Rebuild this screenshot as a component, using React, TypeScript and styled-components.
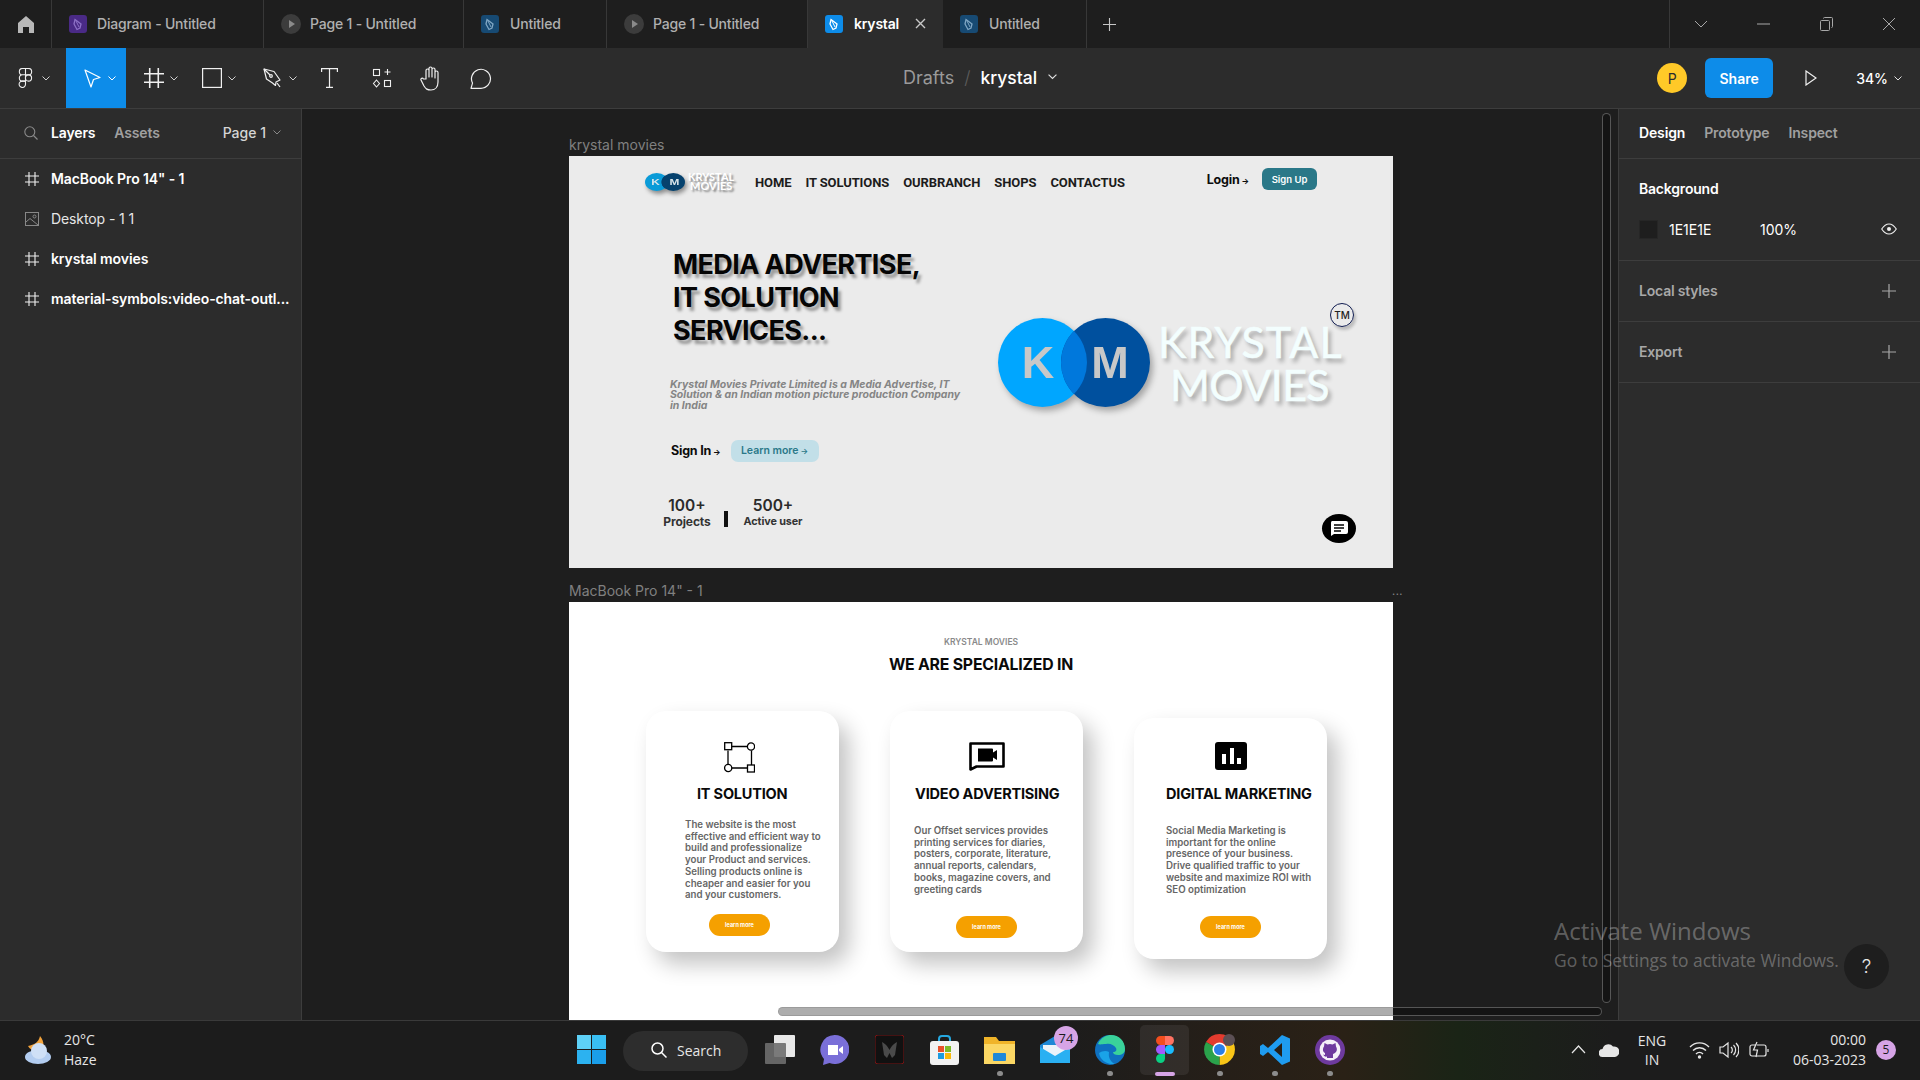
import { styled, createGlobalStyle } from 'styled-components';

const GlobalStyle = createGlobalStyle`
  html, body {
    margin: 0;
    padding: 0;
    background: #1e1e1e;
    overflow: hidden;
  }
`;

const Screen = styled.div`
  position: relative;
  width: 1920px;
  height: 1080px;
  display: flex;
  flex-direction: column;
  overflow: hidden;
  font-family: 'Inter', sans-serif;
  color: #fff;
`;

/* ---------- tab bar ---------- */

const TabBar = styled.div`
  display: flex;
  height: 48px;
  flex: 0 0 48px;
  background: #1e1e1e;
`;

const HomeTab = styled.div`
  width: 52px;
  display: flex;
  align-items: center;
  justify-content: center;
  border-right: 1px solid #383838;
  box-sizing: border-box;
`;

const Tab = styled.div<{ $w: number; $active?: boolean; $gap?: number }>`
  width: ${(p) => p.$w}px;
  box-sizing: border-box;
  display: flex;
  align-items: center;
  gap: ${(p) => p.$gap ?? 11}px;
  padding: 0 0 1px 17px;
  font-size: 14px;
  font-weight: ${(p) => (p.$active ? 600 : 500)};
  letter-spacing: -0.2px;
  white-space: nowrap;
  color: ${(p) => (p.$active ? '#fff' : '#b0b0b0')};
  background: ${(p) => (p.$active ? '#2c2c2c' : 'transparent')};
  border-right: ${(p) => (p.$active ? 'none' : '1px solid #383838')};
`;

const TabClose = styled.span`
  margin-left: 5px;
  display: flex;
`;

const NewTab = styled.div`
  width: 44px;
  display: flex;
  align-items: center;
  justify-content: center;
`;

const WindowControls = styled.div`
  margin-left: auto;
  width: 251px;
  box-sizing: border-box;
  display: flex;
  border-left: 1px solid #383838;
`;

const WindowButton = styled.div`
  flex: 1;
  display: flex;
  align-items: center;
  justify-content: center;
`;

/* ---------- toolbar ---------- */

const Toolbar = styled.div`
  display: flex;
  align-items: center;
  height: 61px;
  flex: 0 0 61px;
  box-sizing: border-box;
  background: #2c2c2c;
  border-bottom: 1px solid #3d3d3d;
`;

const ToolGroup = styled.div`
  width: 903px;
  height: 60px;
  display: flex;
`;

const ToolButton = styled.div<{ $w: number; $pad: number; $active?: boolean; $gap?: number }>`
  width: ${(p) => p.$w}px;
  height: 60px;
  box-sizing: border-box;
  padding-left: ${(p) => p.$pad}px;
  display: flex;
  align-items: center;
  gap: ${(p) => p.$gap ?? 6}px;
  background: ${(p) => (p.$active ? '#0d8ce9' : 'transparent')};
`;

const Breadcrumb = styled.div`
  display: flex;
  align-items: center;
  padding-bottom: 2px;
  font-size: 18px;
  font-weight: 400;
  color: #9a9a9a;
`;

const Slash = styled.span`
  margin: 0 10px 0 10px;
  color: #5c5c5c;
  font-weight: 300;
`;

const FileName = styled.span`
  color: #fff;
  font-size: 17.5px;
  font-weight: 500;
  margin-right: 11px;
`;

const ToolbarRight = styled.div`
  margin-left: auto;
  display: flex;
  align-items: center;
  padding-right: 18px;
`;

const Avatar = styled.div`
  width: 30px;
  height: 30px;
  border-radius: 50%;
  background: #ffc928;
  color: #2c2c2c;
  font-size: 14px;
  display: flex;
  align-items: center;
  justify-content: center;
`;

const ShareButton = styled.div`
  width: 68px;
  height: 40px;
  margin-left: 18px;
  border-radius: 6px;
  background: #0d8ce9;
  font-size: 14px;
  font-weight: 600;
  display: flex;
  align-items: center;
  justify-content: center;
`;

const PlayButton = styled.div`
  margin: 0 39px 0 32px;
  display: flex;
`;

const Zoom = styled.div`
  display: flex;
  align-items: center;
  gap: 6px;
  font-size: 14px;
  font-weight: 500;
`;

/* ---------- side panels ---------- */

const Main = styled.div`
  flex: 1;
  display: flex;
  min-height: 0;
`;

const Panel = styled.div`
  width: 302px;
  flex: 0 0 302px;
  box-sizing: border-box;
  background: #2c2c2c;
  font-size: 14px;
`;

const LeftPanel = styled(Panel)`
  border-right: 1px solid #3d3d3d;
`;

const RightPanel = styled(Panel)`
  border-left: 1px solid #3d3d3d;
`;

const PanelTabs = styled.div`
  height: 50px;
  box-sizing: border-box;
  display: flex;
  align-items: center;
  padding-bottom: 2px;
  border-bottom: 1px solid #3d3d3d;
`;

const LeftTabs = styled(PanelTabs)`
  padding-left: 24px;
`;

const RightTabs = styled(PanelTabs)`
  padding-left: 20px;
  gap: 19px;
`;

const PanelTab = styled.span<{ $active?: boolean }>`
  font-weight: 600;
  letter-spacing: -0.15px;
  color: ${(p) => (p.$active ? '#fff' : '#a0a0a0')};
`;

const LayersTab = styled(PanelTab)`
  margin-left: 13px;
  margin-right: 19px;
`;

const PagePicker = styled.div`
  margin-left: auto;
  padding-right: 20px;
  display: flex;
  align-items: center;
  gap: 7px;
  font-weight: 500;
  color: #d5d5d5;
`;

const LayerRow = styled.div<{ $plain?: boolean }>`
  height: 40px;
  box-sizing: border-box;
  padding: 0 0 1px 25px;
  display: flex;
  align-items: center;
  gap: 12px;
  font-weight: ${(p) => (p.$plain ? 400 : 600)};
  letter-spacing: -0.1px;
  white-space: nowrap;
  color: ${(p) => (p.$plain ? '#e6e6e6' : '#fff')};
`;

const Section = styled.div<{ $h: number }>`
  height: ${(p) => p.$h}px;
  box-sizing: border-box;
  padding: 0 20px;
  border-bottom: 1px solid #3d3d3d;
`;

const SectionHead = styled.div<{ $muted?: boolean }>`
  height: 60px;
  box-sizing: border-box;
  padding-bottom: 1px;
  display: flex;
  align-items: center;
  justify-content: space-between;
  font-weight: 600;
  letter-spacing: -0.2px;
  color: ${(p) => (p.$muted ? '#a8a8a8' : '#fff')};

  svg {
    margin-right: 4px;
  }
`;

const FillRow = styled.div`
  display: flex;
  align-items: center;
  height: 20px;
  font-weight: 400;
`;

const Swatch = styled.div`
  width: 19px;
  height: 19px;
  background: #1e1e1e;
  margin-right: 11px;
  border: 1px solid #262626;
  box-sizing: border-box;
`;

const FillHex = styled.span`
  width: 91px;
`;

const EyeSlot = styled.span`
  margin-left: auto;
  display: flex;
  margin-right: 3px;
`;

/* ---------- canvas ---------- */

const Canvas = styled.div`
  position: relative;
  flex: 1;
  min-width: 0;
  box-sizing: border-box;
  padding: 27px 0 0 267px;
  background: #1e1e1e;
  overflow: hidden;
`;

const FrameLabel = styled.div`
  width: 834px;
  height: 20px;
  box-sizing: border-box;
  padding-bottom: 3px;
  display: flex;
  justify-content: space-between;
  align-items: center;
  font-size: 14px;
  color: #808080;
`;

const FrameDots = styled.span`
  font-size: 11px;
  color: #888;
  letter-spacing: 0.5px;
`;

const HeroFrame = styled.div`
  position: relative;
  width: 824px;
  height: 412px;
  margin-bottom: 14px;
  background: #ebebeb;
  color: #000;
  display: flex;
  flex-direction: column;
`;

const NavRow = styled.div`
  display: flex;
  align-items: flex-start;
  padding: 12px 76px 0 76px;
  height: 34px;
  box-sizing: border-box;
`;

const SmallBrand = styled.div`
  width: 110px;
  height: 22px;
  display: flex;
  align-items: center;
  position: relative;
  top: 3px;
`;

const SmallBrandText = styled.div`
  margin: -3px 0 0 3px;
  font-family: 'Lato', sans-serif;
  font-size: 11px;
  line-height: 9px;
  font-weight: 700;
  text-align: center;
  color: #fff;
  white-space: nowrap;
  text-shadow: 2px 2px 2px rgba(0, 0, 0, 0.45);
`;

const NavLinks = styled.div`
  display: flex;
  gap: 14px;
  margin-top: 7px;
  font-family: 'Roboto', sans-serif;
  font-size: 13px;
  line-height: 16px;
  font-weight: 700;
  letter-spacing: -0.1px;
  color: #1c1c1c;
  white-space: nowrap;
`;

const AuthGroup = styled.div`
  margin-left: auto;
  display: flex;
  align-items: center;
  gap: 13px;
  height: 22px;
`;

const TextLink = styled.span`
  font-size: 12.5px;
  font-weight: 700;
  letter-spacing: -0.2px;
  white-space: nowrap;
  color: #0c0c0c;
`;

const TinyArrow = styled.span`
  font-size: 8px;
  margin-left: 2px;
`;

const SignUp = styled.div`
  width: 55px;
  height: 22px;
  border-radius: 6px;
  background: #2a7888;
  color: #fff;
  font-size: 9.5px;
  font-weight: 600;
  display: flex;
  align-items: center;
  justify-content: center;
`;

const HeroBody = styled.div`
  display: flex;
`;

const HeroCopy = styled.div`
  width: 429px;
  box-sizing: border-box;
  padding: 58px 0 0 101px;
`;

const Headline = styled.h1`
  margin: 0 0 33px 3px;
  font-size: 27px;
  line-height: 33px;
  font-weight: 700;
  letter-spacing: -0.6px;
  color: #050505;
  white-space: nowrap;
  text-shadow: 3px 4px 3px rgba(0, 0, 0, 0.35);
`;

const Lead = styled.p`
  margin: 0 0 29px;
  font-family: 'Inter', sans-serif;
  font-size: 10.5px;
  line-height: 10.3px;
  font-weight: 700;
  font-style: italic;
  color: #858585;
  white-space: nowrap;
`;

const ActionRow = styled.div`
  display: flex;
  align-items: center;
  gap: 10px;
  padding-left: 1px;
`;

const LearnMore = styled.div`
  width: 88px;
  height: 22px;
  border-radius: 7px;
  background: #c2dfe8;
  color: #2a7888;
  font-size: 10.5px;
  font-weight: 600;
  display: flex;
  align-items: center;
  justify-content: center;
  white-space: nowrap;
`;

const StatsRow = styled.div`
  display: flex;
  align-items: flex-end;
  margin: 36px 0 0 -13px;
`;

const Stat = styled.div`
  width: 60px;
  text-align: center;
`;

const StatValue = styled.div`
  font-size: 15.5px;
  line-height: 16px;
  font-weight: 600;
  color: #2a2a2a;
`;

const StatLabel = styled.div<{ $size: number }>`
  font-size: ${(p) => p.$size}px;
  line-height: 16px;
  font-weight: 700;
  letter-spacing: -0.1px;
  color: #333;
  white-space: nowrap;
`;

const StatDivider = styled.div`
  width: 4px;
  height: 16px;
  margin: 0 15px 3px 7px;
  background: #111;
`;

const BigBrand = styled.div`
  position: relative;
  display: flex;
  margin-top: 128px;
  height: 89px;
`;

const BigBrandText = styled.div`
  margin: 2px 0 0 8px;
  width: 183px;
  font-family: 'Lato', sans-serif;
  font-size: 43px;
  line-height: 43px;
  font-weight: 400;
  text-align: center;
  color: #f3fefe;
  white-space: nowrap;
  -webkit-text-stroke: 0.5px #f3fefe;
  text-shadow: 3px 4px 4px rgba(0, 0, 0, 0.3);
`;

const BrandLine = styled.div<{ $spacing: number }>`
  letter-spacing: ${(p) => p.$spacing}px;
`;

const TmBadge = styled.div`
  position: absolute;
  left: 332px;
  top: -15px;
  width: 24px;
  height: 24px;
  box-sizing: border-box;
  border: 1px solid #101c50;
  border-radius: 50%;
  font-size: 10px;
  font-weight: 500;
  color: #222;
  display: flex;
  align-items: center;
  justify-content: center;
  box-shadow: 2px 3px 3px rgba(0, 0, 0, 0.2);
`;

const ChatBubble = styled.div`
  position: absolute;
  left: 753px;
  top: 358px;
  width: 34px;
  height: 29px;
  border-radius: 50%;
  background: #000;
  display: flex;
  align-items: center;
  justify-content: center;
`;

const ServicesFrame = styled.div`
  width: 824px;
  height: 560px;
  background: #fff;
  color: #000;
  box-sizing: border-box;
  padding-top: 34px;
`;

const Eyebrow = styled.div`
  text-align: center;
  font-size: 8.5px;
  line-height: 12px;
  font-weight: 600;
  color: #8a8a8a;
`;

const SectionTitle = styled.h2`
  margin: 5px 0 34px;
  text-align: center;
  font-size: 15.8px;
  line-height: 24px;
  font-weight: 700;
  letter-spacing: -0.2px;
  color: #0a0a0a;
`;

const CardRow = styled.div`
  display: flex;
  align-items: flex-start;
  gap: 51px;
  padding-left: 77px;
`;

const Card = styled.div<{ $offset: number; $indent: number }>`
  width: 193px;
  height: 241px;
  box-sizing: border-box;
  margin-top: ${(p) => p.$offset}px;
  padding: ${(p) => 31 - p.$offset}px 0 0 ${(p) => p.$indent}px;
  border-radius: 20px;
  background: #fff;
  box-shadow: 10px 12px 22px rgba(0, 0, 0, 0.24);
  display: flex;
  flex-direction: column;
`;

const CardIcon = styled.div<{ $x: number }>`
  height: 31px;
  margin-left: ${(p) => p.$x}px;
  display: flex;
`;

const CardTitle = styled.h3<{ $x: number }>`
  margin: 12px 0 0 ${(p) => p.$x}px;
  font-size: 14.5px;
  line-height: 18px;
  font-weight: 700;
  letter-spacing: -0.2px;
  white-space: nowrap;
  color: #0a0a0a;
`;

const CardText = styled.p<{ $gap: number }>`
  margin: ${(p) => p.$gap}px 0 0;
  font-size: 9.7px;
  line-height: 11.7px;
  font-weight: 600;
  color: #666;
  white-space: nowrap;
`;

const CardButton = styled.div<{ $x: number; $gap: number }>`
  width: 61px;
  height: 22px;
  margin: ${(p) => p.$gap}px 0 0 ${(p) => p.$x}px;
  border-radius: 11px;
  background: #f5a000;
  color: #fff;
  font-size: 5.5px;
  font-weight: 700;
  display: flex;
  align-items: center;
  justify-content: center;
`;

const HScroll = styled.div`
  position: absolute;
  left: 476px;
  top: 898px;
  width: 824px;
  height: 9px;
  box-sizing: border-box;
  border-radius: 5px;
  background: rgba(0, 0, 0, 0.32);
  border: 1px solid rgba(140, 140, 140, 0.55);
`;

const VScroll = styled.div`
  position: absolute;
  left: 1300px;
  top: 4px;
  width: 9px;
  height: 890px;
  box-sizing: border-box;
  border-radius: 5px;
  background: rgba(0, 0, 0, 0.32);
  border: 1px solid rgba(140, 140, 140, 0.55);
`;

/* ---------- overlays ---------- */

const Watermark = styled.div`
  position: absolute;
  left: 1554px;
  top: 914px;
  font-family: 'Open Sans', sans-serif;
  color: rgba(255, 255, 255, 0.3);
  white-space: nowrap;
`;

const WatermarkTitle = styled.div`
  font-size: 24px;
  line-height: 34px;
`;

const WatermarkText = styled.div`
  font-size: 17.4px;
  line-height: 25px;
`;

const HelpButton = styled.div`
  position: absolute;
  left: 1844px;
  top: 944px;
  width: 45px;
  height: 45px;
  border-radius: 50%;
  background: #1e1e1e;
  font-size: 19px;
  font-weight: 300;
  display: flex;
  align-items: center;
  justify-content: center;
  color: #e8e8e8;
`;

/* ---------- taskbar ---------- */

const Taskbar = styled.div`
  height: 60px;
  flex: 0 0 60px;
  box-sizing: border-box;
  display: flex;
  align-items: center;
  border-top: 1px solid #3a3a3a;
  background: linear-gradient(90deg, #1c1c1c 0%, #1c1c1c 55%, #261f18 64%, #2a2116 70%, #1a2416 76%, #1c1c1c 84%);
  font-family: 'Open Sans', sans-serif;
  font-size: 14px;
  color: #e6e6e6;
`;

const Weather = styled.div`
  width: 577px;
  box-sizing: border-box;
  padding: 0 0 2px 24px;
  display: flex;
  align-items: center;
  gap: 8px;
  line-height: 20px;
`;

const WinSlot = styled.div`
  width: 46px;
  display: flex;
  padding-bottom: 2px;
`;

const SearchPill = styled.div`
  width: 125px;
  height: 40px;
  margin-right: 4px;
  border-radius: 20px;
  background: #2d2d2d;
  display: flex;
  align-items: center;
  gap: 10px;
  padding: 0 0 1px 28px;
  box-sizing: border-box;
`;

const TaskSlot = styled.div`
  position: relative;
  width: 55px;
  height: 59px;
  box-sizing: border-box;
  padding-bottom: 2px;
  display: flex;
  align-items: center;
  justify-content: center;
`;

const ActiveBack = styled.div`
  position: absolute;
  left: 3px;
  top: 4px;
  width: 49px;
  height: 50px;
  border-radius: 5px;
  background: rgba(255, 255, 255, 0.07);
`;

const RunDot = styled.span<{ $active?: boolean }>`
  position: absolute;
  left: 50%;
  bottom: 4px;
  transform: translateX(-50%);
  width: ${(p) => (p.$active ? 20 : 6)}px;
  height: ${(p) => (p.$active ? 4 : 5)}px;
  border-radius: 3px;
  background: ${(p) => (p.$active ? '#d6a4e6' : '#8c8c8c')};
`;

const CountBadge = styled.span`
  position: absolute;
  left: 27px;
  top: 5px;
  width: 24px;
  height: 24px;
  border-radius: 50%;
  background: #d6a4e6;
  color: #1a1a1a;
  font-size: 13px;
  display: flex;
  align-items: center;
  justify-content: center;
`;

const Tray = styled.div`
  margin-left: auto;
  display: flex;
  align-items: center;
  padding: 0 24px 2px 0;
`;

const TraySlot = styled.div<{ $w: number }>`
  width: ${(p) => p.$w}px;
  display: flex;
  justify-content: center;
`;

const TrayText = styled.div`
  width: 50px;
  margin-right: 4px;
  text-align: center;
  line-height: 19px;
`;

const Clock = styled.div`
  width: 89px;
  text-align: right;
  line-height: 20px;
  white-space: nowrap;
`;

const TrayBadge = styled.div`
  width: 20px;
  height: 20px;
  margin-left: 10px;
  border-radius: 50%;
  background: #d6a4e6;
  color: #1a1a1a;
  font-size: 12px;
  display: flex;
  align-items: center;
  justify-content: center;
`;

/* ---------- drawings ---------- */

const MarkSvg = styled.svg<{ $shadow: string }>`
  display: block;
  flex: none;
  overflow: visible;
  filter: drop-shadow(${(p) => p.$shadow});
`;

interface LogoMarkProps {
  id: string;
  w: number;
  h: number;
  left: string;
  right: string;
  overlap: string;
  letters: string;
  shadow: string;
}

const LogoMark = ({ id, w, h, left, right, overlap, letters, shadow }: LogoMarkProps) => (
  <MarkSvg width={w} height={h} viewBox="0 0 152 89" preserveAspectRatio="none" $shadow={shadow}>
    <defs>
      <clipPath id={id}>
        <circle cx="44.5" cy="44.5" r="44.5" />
      </clipPath>
    </defs>
    <circle cx="44.5" cy="44.5" r="44.5" fill={left} />
    <circle cx="107.5" cy="44.5" r="44.5" fill={right} />
    <circle cx="107.5" cy="44.5" r="44.5" fill={overlap} clipPath={`url(#${id})`} />
    <text x="40" y="60" textAnchor="middle" fontFamily="Liberation Sans, sans-serif" fontWeight="700" fontSize="45" fill={letters}>K</text>
    <text x="112" y="60" textAnchor="middle" fontFamily="Liberation Sans, sans-serif" fontWeight="700" fontSize="45" fill={letters}>M</text>
  </MarkSvg>
);

const Chevron = ({ color = '#d0d0d0', size = 8 }: { color?: string; size?: number }) => (
  <svg width={size} height={size * 0.625} viewBox="0 0 8 5" fill="none" stroke={color} strokeWidth="1">
    <path d="M.5.5 4 4 7.500.5" />
  </svg>
);

const FrameGlyph = ({ size = 14 }: { size?: number }) => (
  <svg width={size} height={size} viewBox="0 0 14 14" fill="none" stroke="#f0f0f0" strokeWidth="1.1">
    <path d="M0 4h14M0 10h14M4 0v14M10 0v14" />
  </svg>
);

const FileGlyph = ({ bg, fg, opacity = 1 }: { bg: string; fg: string; opacity?: number }) => (
  <svg width="18" height="18" viewBox="0 0 18 18" opacity={opacity}>
    <rect width="18" height="18" rx="3" fill={bg} />
    <path d="M6 4.500 12 9l-1 4-3 1.500L5 9z" fill="none" stroke={fg} strokeWidth="1.300" />
    <path d="m7 6 3 6" stroke={fg} strokeWidth="1" />
  </svg>
);

const PlayGlyph = () => (
  <svg width="20" height="20" viewBox="0 0 20 20">
    <circle cx="10" cy="10" r="10" fill="#3c3c3c" />
    <path d="m8 6 6 4-6 4z" fill="#8a8a8a" />
  </svg>
);

const PlusGlyph = ({ size = 14, color = '#a8a8a8' }: { size?: number; color?: string }) => (
  <svg width={size} height={size} viewBox="0 0 14 14" stroke={color} strokeWidth="1.200">
    <path d="M7 0v14M0 7h14" />
  </svg>
);

const tabs = [
  { w: 212, gap: 10, label: 'Diagram - Untitled', icon: <FileGlyph bg="#4a2a86" fg="#8d70c6" /> },
  { w: 200, gap: 9, label: 'Page 1 - Untitled', icon: <PlayGlyph /> },
  { w: 143, gap: 11, label: 'Untitled', icon: <FileGlyph bg="#174a73" fg="#7fa6c4" /> },
  { w: 201, gap: 9, label: 'Page 1 - Untitled', icon: <PlayGlyph /> },
];

const layers = [
  { label: 'MacBook Pro 14" - 1' },
  { label: 'Desktop - 1 1', plain: true },
  { label: 'krystal movies' },
  { label: 'material-symbols:video-chat-outl...' },
];

const cards = [
  {
    title: 'IT SOLUTION',
    offset: 0,
    indent: 39,
    iconX: 39,
    titleX: 12,
    textGap: 16,
    btnX: 24,
    btnGap: 13,
    lines: [
      'The website is the most',
      'effective and efficient way to',
      'build and professionalize',
      'your Product and services.',
      'Selling products online is',
      'cheaper and easier for you',
      'and your customers.',
    ],
    button: 'learn more',
    icon: (
      <svg width="31" height="31" viewBox="0 0 31 31" fill="none" stroke="#000" strokeWidth="1.300">
        <path d="M8 4.500h15M27.500 8.500v15M23 26h-15M4 23V8.500" />
        <rect x=".7" y=".7" width="7" height="7" fill="#fff" />
        <circle cx="27" cy="4.500" r="3.600" fill="#fff" />
        <circle cx="4.200" cy="26" r="3.600" fill="#fff" />
        <rect x="23.500" y="23" width="7" height="7" fill="#fff" />
      </svg>
    ),
  },
  {
    title: 'VIDEO ADVERTISING',
    offset: 0,
    indent: 24,
    iconX: 55,
    titleX: 1,
    textGap: 22,
    btnX: 42,
    btnGap: 21,
    lines: [
      'Our Offset services provides',
      'printing services for diaries,',
      'posters, corporate, literature,',
      'annual reports, calendars,',
      'books, magazine covers, and',
      'greeting cards',
    ],
    button: 'learn more',
    icon: (
      <svg width="36" height="29" viewBox="0 0 36 29" fill="none">
        <path d="M1.500 1.500h33v23h-27l-6 3z" stroke="#000" strokeWidth="2.600" strokeLinejoin="round" />
        <path d="M9 6.500h14a1 1 0 0 1 1 1v3l4-2.500v10l-4-2.500v3a1 1 0 0 1-1 1H9z" fill="#000" />
      </svg>
    ),
  },
  {
    title: 'DIGITAL MARKETING',
    offset: 7,
    indent: 32,
    iconX: 49,
    titleX: 0,
    textGap: 22,
    btnX: 34,
    btnGap: 21,
    lines: [
      'Social Media Marketing is',
      'important for the online',
      'presence of your business.',
      'Drive qualified traffic to your',
      'website and maximize ROI with',
      'SEO optimization',
    ],
    button: 'learn more',
    icon: (
      <svg width="32" height="28" viewBox="0 0 32 28">
        <rect width="32" height="28" rx="3" fill="#000" />
        <path d="M7 12h4v10H7zM15 6h4v16h-4zM22 16h4v6h-4z" fill="#fff" />
      </svg>
    ),
  },
];

const App = () => (
  <Screen>
    <GlobalStyle />

    <TabBar>
      <HomeTab>
        <svg width="16" height="17" viewBox="0 0 16 17" fill="#b8b8b8">
          <path d="M8 0 16 7v10h-5v-6H5v6H0V7z" />
        </svg>
      </HomeTab>
      {tabs.map((tab) => (
        <Tab key={tab.w} $w={tab.w} $gap={tab.gap}>
          {tab.icon}
          {tab.label}
        </Tab>
      ))}
      <Tab $w={135} $active>
        <FileGlyph bg="#0d8ce9" fg="#fff" />
        krystal
        <TabClose>
          <svg width="11" height="11" viewBox="0 0 11 11" stroke="#c8c8c8" strokeWidth="1.400">
            <path d="m1 1 9 9M10 1l-9 9" />
          </svg>
        </TabClose>
      </Tab>
      <Tab $w={144}>
        <FileGlyph bg="#174a73" fg="#7fa6c4" />
        Untitled
      </Tab>
      <NewTab>
        <PlusGlyph size={13} color="#c8c8c8" />
      </NewTab>
      <WindowControls>
        <WindowButton>
          <svg width="14" height="8" viewBox="0 0 14 8" fill="none" stroke="#a8a8a8">
            <path d="m1 1 6 6 6-6" />
          </svg>
        </WindowButton>
        <WindowButton>
          <svg width="13" height="2" viewBox="0 0 13 2" stroke="#a8a8a8">
            <path d="M0 1h13" />
          </svg>
        </WindowButton>
        <WindowButton>
          <svg width="13" height="14" viewBox="0 0 13 14" fill="none" stroke="#a8a8a8">
            <rect x=".5" y="3.500" width="9" height="10" rx="1" />
            <path d="M3.500 1.500a1 1 0 0 1 1-1h7a1 1 0 0 1 1 1v8a1 1 0 0 1-1 1" />
          </svg>
        </WindowButton>
        <WindowButton>
          <svg width="14" height="14" viewBox="0 0 14 14" stroke="#a8a8a8">
            <path d="m1 1 12 12M13 1 1 13" />
          </svg>
        </WindowButton>
      </WindowControls>
    </TabBar>

    <Toolbar>
      <ToolGroup>
        <ToolButton $w={66} $pad={18} $gap={9}>
          <svg width="15" height="20" viewBox="0 0 15 20" fill="none" stroke="#f0f0f0" strokeWidth="1.100">
            <path d="M7.500.5h-3a3 3 0 0 0 0 6.300h3zM7.500.5h3a3 3 0 0 1 0 6.300h-3zM7.500 6.800h-3a3 3 0 0 0 0 6.300h3z" />
            <circle cx="10.500" cy="10" r="3.100" />
            <path d="M7.500 13.100h-3a3.200 3.200 0 1 0 3 3.200z" />
          </svg>
          <Chevron />
        </ToolButton>
        <ToolButton $w={60} $active $pad={18}>
          <svg width="18" height="19" viewBox="0 0 18 19" fill="none" stroke="#fff" strokeWidth="1.200">
            <path d="M1 1 16 8.500 9.500 10.500 7 18z" strokeLinejoin="round" />
          </svg>
          <Chevron color="#fff" />
        </ToolButton>
        <ToolButton $w={66} $pad={18}>
          <FrameGlyph size={20} />
          <Chevron />
        </ToolButton>
        <ToolButton $w={60} $pad={10}>
          <svg width="20" height="20" viewBox="0 0 20 20" fill="none" stroke="#f0f0f0" strokeWidth="1.200">
            <rect x=".6" y=".6" width="18.800" height="18.800" />
          </svg>
          <Chevron />
        </ToolButton>
        <ToolButton $w={60} $pad={11}>
          <svg width="20" height="20" viewBox="0 0 20 20" fill="none" stroke="#f0f0f0" strokeWidth="1.200">
            <path d="M1 1 11 3.500 17 12l-4 2-.5 3.500-3-2.500L3.500 11z" strokeLinejoin="round" />
            <path d="m1 1 6 6" />
            <circle cx="8" cy="8" r="1.300" />
            <path d="m14 15 3 4" />
          </svg>
          <Chevron />
        </ToolButton>
        <ToolButton $w={60} $pad={9}>
          <svg width="17" height="20" viewBox="0 0 17 20" fill="none" stroke="#f0f0f0" strokeWidth="1.200">
            <path d="M.6 4V.6h15.800V4M8.500.6v18.800M5 19.400h7" />
          </svg>
        </ToolButton>
        <ToolButton $w={48} $pad={0}>
          <svg width="20" height="20" viewBox="0 0 20 20" fill="none" stroke="#f0f0f0" strokeWidth="1.100">
            <rect x="1.500" y="1.500" width="6" height="6" />
            <path d="M15.500 1v6M12.500 4h6" />
            <path d="m4.500 12 3 3.500-3 3.500-3-3.500z" />
            <rect x="12.500" y="12.500" width="6" height="6" />
          </svg>
        </ToolButton>
        <ToolButton $w={49} $pad={0}>
          <svg width="22" height="25" viewBox="0 0 22 25" fill="none" stroke="#f0f0f0" strokeWidth="1.200" strokeLinecap="round" strokeLinejoin="round">
            <path d="M6 13V4.500a1.500 1.500 0 0 1 3 0V11V2.500a1.500 1.500 0 0 1 3 0V11V3.500a1.500 1.500 0 0 1 3 0V12V6.500a1.500 1.500 0 0 1 3 0V16c0 5-3 8-7 8s-5-1-7-4l-3-6c-.7-1.500 1.500-2.500 2.500-1z" />
          </svg>
        </ToolButton>
        <ToolButton $w={40} $pad={0}>
          <svg width="23" height="21" viewBox="0 0 23 21" fill="none" stroke="#f0f0f0" strokeWidth="1.200" strokeLinejoin="round">
            <path d="M2 20.300h10a9.500 9.500 0 1 0-8.500-5.200z" />
          </svg>
        </ToolButton>
      </ToolGroup>
      <Breadcrumb>
        Drafts
        <Slash>/</Slash>
        <FileName>krystal</FileName>
        <Chevron size={9} color="#e0e0e0" />
      </Breadcrumb>
      <ToolbarRight>
        <Avatar>P</Avatar>
        <ShareButton>Share</ShareButton>
        <PlayButton>
          <svg width="12" height="16" viewBox="0 0 12 16" fill="none" stroke="#f0f0f0" strokeWidth="1.200">
            <path d="M1 1v14l10-7z" />
          </svg>
        </PlayButton>
        <Zoom>
          34%
          <Chevron size={8} color="#e0e0e0" />
        </Zoom>
      </ToolbarRight>
    </Toolbar>

    <Main>
      <LeftPanel>
        <LeftTabs>
          <svg width="14" height="14" viewBox="0 0 14 14" fill="none" stroke="#8a8a8a" strokeWidth="1.100">
            <circle cx="5.800" cy="5.800" r="5" />
            <path d="m9.500 9.500 4 4" />
          </svg>
          <LayersTab $active>Layers</LayersTab>
          <PanelTab>Assets</PanelTab>
          <PagePicker>
            Page 1
            <Chevron color="#8a8a8a" />
          </PagePicker>
        </LeftTabs>
        {layers.map((layer) => (
          <LayerRow key={layer.label} $plain={layer.plain}>
            {layer.plain ? (
              <svg width="14" height="14" viewBox="0 0 14 14" fill="none" stroke="#888" strokeWidth="1">
                <rect x=".5" y=".5" width="13" height="13" />
                <path d="m1 10 4-3.500 8 6.500" />
                <circle cx="9.500" cy="4.500" r="1.500" />
              </svg>
            ) : (
              <FrameGlyph />
            )}
            {layer.label}
          </LayerRow>
        ))}
      </LeftPanel>

      <Canvas>
        <FrameLabel>krystal movies</FrameLabel>
        <HeroFrame>
          <NavRow>
            <SmallBrand>
              <LogoMark id="mark-small" w={40} h={18} left="#0a9bd8" right="#06426e" overlap="#06426e" letters="#d8e4ea" shadow="2px 3px 2px rgba(0,0,0,.4)" />
              <SmallBrandText>
                KRYSTAL
                <br />
                MOVIES
              </SmallBrandText>
            </SmallBrand>
            <NavLinks>
              <span>HOME</span>
              <span>IT SOLUTIONS</span>
              <span>OURBRANCH</span>
              <span>SHOPS</span>
              <span>CONTACTUS</span>
            </NavLinks>
            <AuthGroup>
              <TextLink>
                Login<TinyArrow>→</TinyArrow>
              </TextLink>
              <SignUp>Sign Up</SignUp>
            </AuthGroup>
          </NavRow>
          <HeroBody>
            <HeroCopy>
              <Headline>
                MEDIA ADVERTISE,
                <br />
                IT SOLUTION
                <br />
                SERVICES...
              </Headline>
              <Lead>
                Krystal Movies Private Limited is a Media Advertise, IT
                <br />
                Solution &amp; an Indian motion picture production Company
                <br />
                in India
              </Lead>
              <ActionRow>
                <TextLink>
                  Sign In<TinyArrow>→</TinyArrow>
                </TextLink>
                <LearnMore>
                  Learn more<TinyArrow>→</TinyArrow>
                </LearnMore>
              </ActionRow>
              <StatsRow>
                <Stat>
                  <StatValue>100+</StatValue>
                  <StatLabel $size={12}>Projects</StatLabel>
                </Stat>
                <StatDivider />
                <Stat>
                  <StatValue>500+</StatValue>
                  <StatLabel $size={10.8}>Active user</StatLabel>
                </Stat>
              </StatsRow>
            </HeroCopy>
            <BigBrand>
              <LogoMark id="mark-big" w={152} h={89} left="#00a6ff" right="#00509e" overlap="#0078dc" letters="#c8c8c8" shadow="3px 4px 3px rgba(0,0,0,.3)" />
              <BigBrandText>
                <BrandLine $spacing={1.1}>KRYSTAL</BrandLine>
                <BrandLine $spacing={-0.6}>MOVIES</BrandLine>
              </BigBrandText>
              <TmBadge>TM</TmBadge>
            </BigBrand>
          </HeroBody>
          <ChatBubble>
            <svg width="18" height="15" viewBox="0 0 18 15">
              <path d="M2 0h14a2 2 0 0 1 2 2v9a2 2 0 0 1-2 2H4l-3 2V2a2 2 0 0 1 1-2z" fill="#fff" />
              <path d="M4 4h10M4 7h10M4 10h7" stroke="#000" strokeWidth="1.300" />
            </svg>
          </ChatBubble>
        </HeroFrame>

        <FrameLabel>
          MacBook Pro 14" - 1
          <FrameDots>...</FrameDots>
        </FrameLabel>
        <ServicesFrame>
          <Eyebrow>KRYSTAL MOVIES</Eyebrow>
          <SectionTitle>WE ARE SPECIALIZED IN</SectionTitle>
          <CardRow>
            {cards.map((card) => (
              <Card key={card.title} $offset={card.offset} $indent={card.indent}>
                <CardIcon $x={card.iconX}>{card.icon}</CardIcon>
                <CardTitle $x={card.titleX}>{card.title}</CardTitle>
                <CardText $gap={card.textGap}>
                  {card.lines.map((line) => (
                    <span key={line}>
                      {line}
                      <br />
                    </span>
                  ))}
                </CardText>
                <CardButton $x={card.btnX} $gap={card.btnGap}>
                  {card.button}
                </CardButton>
              </Card>
            ))}
          </CardRow>
        </ServicesFrame>
        <HScroll />
        <VScroll />
      </Canvas>

      <RightPanel>
        <RightTabs>
          <PanelTab $active>Design</PanelTab>
          <PanelTab>Prototype</PanelTab>
          <PanelTab>Inspect</PanelTab>
        </RightTabs>
        <Section $h={102}>
          <SectionHead>Background</SectionHead>
          <FillRow>
            <Swatch />
            <FillHex>1E1E1E</FillHex>
            100%
            <EyeSlot>
              <svg width="16" height="12" viewBox="0 0 16 12" fill="none" stroke="#f0f0f0" strokeWidth="1.100">
                <path d="M.7 6C3 2.500 5.500 1 8 1s5 1.500 7.300 5C13 9.500 10.500 11 8 11S3 9.500.7 6z" />
                <circle cx="8" cy="6" r="2" fill="#f0f0f0" stroke="none" />
              </svg>
            </EyeSlot>
          </FillRow>
        </Section>
        <Section $h={61}>
          <SectionHead $muted>
            Local styles
            <PlusGlyph />
          </SectionHead>
        </Section>
        <Section $h={61}>
          <SectionHead $muted>
            Export
            <PlusGlyph />
          </SectionHead>
        </Section>
      </RightPanel>
    </Main>

    <Taskbar>
      <Weather>
        <svg width="32" height="28" viewBox="0 0 32 28">
          <path d="M16 0c-1 6-6 9-12 10 2 4 7 6 13 4 3-1 4-8-1-14z" fill="#f2a33c" />
          <ellipse cx="14" cy="21" rx="13" ry="7" fill="#b3cdf0" />
          <circle cx="15" cy="15" r="8" fill="#cfe0f6" />
        </svg>
        <div>
          20°C
          <br />
          Haze
        </div>
      </Weather>
      <WinSlot>
        <svg width="29" height="29" viewBox="0 0 29 29">
          <path d="M0 0h14v14H0z" fill="#5ed1f7" />
          <path d="M15 0h14v14H15z" fill="#39bff3" />
          <path d="M0 15h14v14H0z" fill="#2cb2f0" />
          <path d="M15 15h14v14H15z" fill="#1a9eea" />
        </svg>
      </WinSlot>
      <SearchPill>
        <svg width="16" height="16" viewBox="0 0 16 16" fill="none" stroke="#fff" strokeWidth="1.500">
          <circle cx="6.500" cy="6.500" r="5.500" />
          <path d="m10.500 10.500 5 5" />
        </svg>
        Search
      </SearchPill>
      <TaskSlot>
        <svg width="30" height="29" viewBox="0 0 30 29">
          <rect x="9" width="21" height="22" rx="1" fill="#e8e8e8" />
          <rect y="8" width="21" height="21" rx="1" fill="#6e6e6e" opacity=".9" />
        </svg>
      </TaskSlot>
      <TaskSlot>
        <svg width="29" height="30" viewBox="0 0 29 30">
          <path d="M14.500 0a14.500 14.500 0 1 1-5 28L3 30l1-6A14.500 14.500 0 0 1 14.500 0z" fill="#7a6fd8" />
          <path d="M8 10h10v10H8zM19 14l4-3v8l-4-3z" fill="#fff" />
        </svg>
      </TaskSlot>
      <TaskSlot>
        <svg width="29" height="29" viewBox="0 0 29 29">
          <rect width="29" height="29" rx="3" fill="#111" stroke="#7a1414" />
          <path d="M7 7c2 1 5 3 7.500 8C17 10 20 8 22 7l-2 13-3 3-2.500-5-2.500 5-3-3z" fill="#4a4a4a" />
        </svg>
      </TaskSlot>
      <TaskSlot>
        <svg width="29" height="30" viewBox="0 0 29 30">
          <path d="M9 7V4a3 3 0 0 1 3-3h5a3 3 0 0 1 3 3v3" fill="none" stroke="#25a8e0" strokeWidth="2" />
          <rect y="6" width="29" height="24" rx="3" fill="#f2f2f2" />
          <path d="M8 11h6v6H8z" fill="#e8502a" />
          <path d="M15 11h6v6h-6z" fill="#7dba28" />
          <path d="M8 18h6v6H8z" fill="#1c9be0" />
          <path d="M15 18h6v6h-6z" fill="#f9b90b" />
        </svg>
      </TaskSlot>
      <TaskSlot>
        <svg width="31" height="29" viewBox="0 0 31 29">
          <path d="M0 2h12l3 4h16v23H0z" fill="#f0b429" />
          <path d="M0 9h31v20H0z" fill="#fbd764" />
          <rect x="9" y="18" width="13" height="8" rx="1" fill="#1e88d8" />
        </svg>
        <RunDot />
      </TaskSlot>
      <TaskSlot>
        <svg width="30" height="27" viewBox="0 0 30 27">
          <path d="M0 9 15 0l15 9v18H0z" fill="#1c88d6" />
          <path d="M3 9h24v9L15 26 3 18z" fill="#eaf3fa" />
          <path d="M0 11 15 20 30 11v16H0z" fill="#2ab0f2" />
        </svg>
        <CountBadge>74</CountBadge>
      </TaskSlot>
      <TaskSlot>
        <svg width="30" height="30" viewBox="0 0 30 30">
          <circle cx="15" cy="15" r="15" fill="#0f70c0" />
          <path d="M3 9C6 2 12 0 16 0c8 0 14 6 14 14 0 4-3 6-7 6-3 0-5-1-5-3 3 0 4-2 3-4-2-3-6-5-10-4-4 0-6 1-8 0z" fill="#3ad29a" />
          <path d="M4 18c1 7 8 12 16 11-4-2-7-6-6-12-3-2-7-1-10 1z" fill="#1aa3e8" />
        </svg>
        <RunDot />
      </TaskSlot>
      <TaskSlot>
        <ActiveBack />
        <svg width="18" height="27" viewBox="0 0 18 27" style={{ position: 'relative' }}>
          <path d="M0 4.500A4.500 4.500 0 0 1 4.500 0H9v9H4.500A4.500 4.500 0 0 1 0 4.500z" fill="#f24e1e" />
          <path d="M9 0h4.500a4.500 4.500 0 0 1 0 9H9z" fill="#ff7262" />
          <path d="M0 13.500A4.500 4.500 0 0 1 4.500 9H9v9H4.500A4.500 4.500 0 0 1 0 13.500z" fill="#a259ff" />
          <circle cx="13.500" cy="13.500" r="4.500" fill="#1abcfe" />
          <path d="M0 22.500A4.500 4.500 0 0 1 4.500 18H9v4.500a4.500 4.500 0 0 1-9 0z" fill="#0acf83" />
        </svg>
        <RunDot $active />
      </TaskSlot>
      <TaskSlot>
        <svg width="31" height="31" viewBox="0 0 31 31">
          <path d="M15.500 15.500 2 8A15.500 15.500 0 0 1 29 8z" fill="#e33b2e" />
          <path d="M15.500 15.500 29 8a15.500 15.500 0 0 1-13.500 23z" fill="#f9c517" />
          <path d="M15.500 15.500V31A15.500 15.500 0 0 1 2 8z" fill="#2aa24b" />
          <circle cx="15.500" cy="15.500" r="7" fill="#fff" />
          <circle cx="15.500" cy="15.500" r="5.500" fill="#2a7fe8" />
          <circle cx="25" cy="6" r="6" fill="#5c5055" />
        </svg>
        <RunDot />
      </TaskSlot>
      <TaskSlot>
        <svg width="30" height="30" viewBox="0 0 30 30">
          <path d="M22 0 30 3.500v23L22 30 8 17l-5 4-3-2V11l3-2 5 4zM22 8l-8 7 8 7z" fill="#1f9cf0" fillRule="evenodd" />
        </svg>
        <RunDot />
      </TaskSlot>
      <TaskSlot>
        <svg width="30" height="30" viewBox="0 0 30 30">
          <circle cx="15" cy="15" r="15" fill="#6e3a9e" />
          <circle cx="15" cy="15" r="10.500" fill="#f4f0f8" />
          <path d="M9 11.500 9.500 8l3 1.500a7 7 0 0 1 5 0L20.500 8l.5 3.500c2 3 .5 6.500-3 7.500v4h-6v-1.500c-2 .5-3-.5-4-2l2 .5v-2c-2.500-1-2.500-4.500-1-6.500z" fill="#6e3a9e" />
        </svg>
        <RunDot />
      </TaskSlot>
      <Tray>
        <TraySlot $w={26}>
          <svg width="15" height="9" viewBox="0 0 15 9" fill="none" stroke="#e6e6e6" strokeWidth="1.200">
            <path d="m1 8 6.500-7L14 8" />
          </svg>
        </TraySlot>
        <TraySlot $w={36}>
          <svg width="20" height="14" viewBox="0 0 20 14" fill="#e6e6e6">
            <path d="M4 14a4 4 0 0 1-.5-8A6 6 0 0 1 14 3.500 5 5 0 0 1 16 14z" />
          </svg>
        </TraySlot>
        <TrayText>
          ENG
          <br />
          IN
        </TrayText>
        <TraySlot $w={36}>
          <svg width="21" height="18" viewBox="0 0 21 18" fill="none" stroke="#e6e6e6" strokeWidth="1.400">
            <path d="M1 6a13 13 0 0 1 19 0M4 9.500a9 9 0 0 1 13 0M7 13a5 5 0 0 1 7 0" />
            <circle cx="10.500" cy="16" r="1" fill="#e6e6e6" />
          </svg>
        </TraySlot>
        <TraySlot $w={24}>
          <svg width="20" height="18" viewBox="0 0 20 18" fill="none" stroke="#e6e6e6" strokeWidth="1.200">
            <path d="M1 6h3l5-4v14l-5-4H1z" />
            <path d="M12 6a4 4 0 0 1 0 6M14.500 4a7 7 0 0 1 0 10M17 2a10 10 0 0 1 0 14" />
          </svg>
        </TraySlot>
        <TraySlot $w={36}>
          <svg width="21" height="17" viewBox="0 0 21 17" fill="none" stroke="#e6e6e6" strokeWidth="1.200">
            <rect x="1" y="4" width="16" height="11" rx="2" />
            <path d="M19 8v3" />
            <path d="M8 1 4.500 9h4L7 16" fill="#1c1c1c" />
          </svg>
        </TraySlot>
        <Clock>
          00:00
          <br />
          06-03-2023
        </Clock>
        <TrayBadge>5</TrayBadge>
      </Tray>
    </Taskbar>

    <Watermark>
      <WatermarkTitle>Activate Windows</WatermarkTitle>
      <WatermarkText>Go to Settings to activate Windows.</WatermarkText>
    </Watermark>
    <HelpButton>?</HelpButton>
  </Screen>
);

export default App;
